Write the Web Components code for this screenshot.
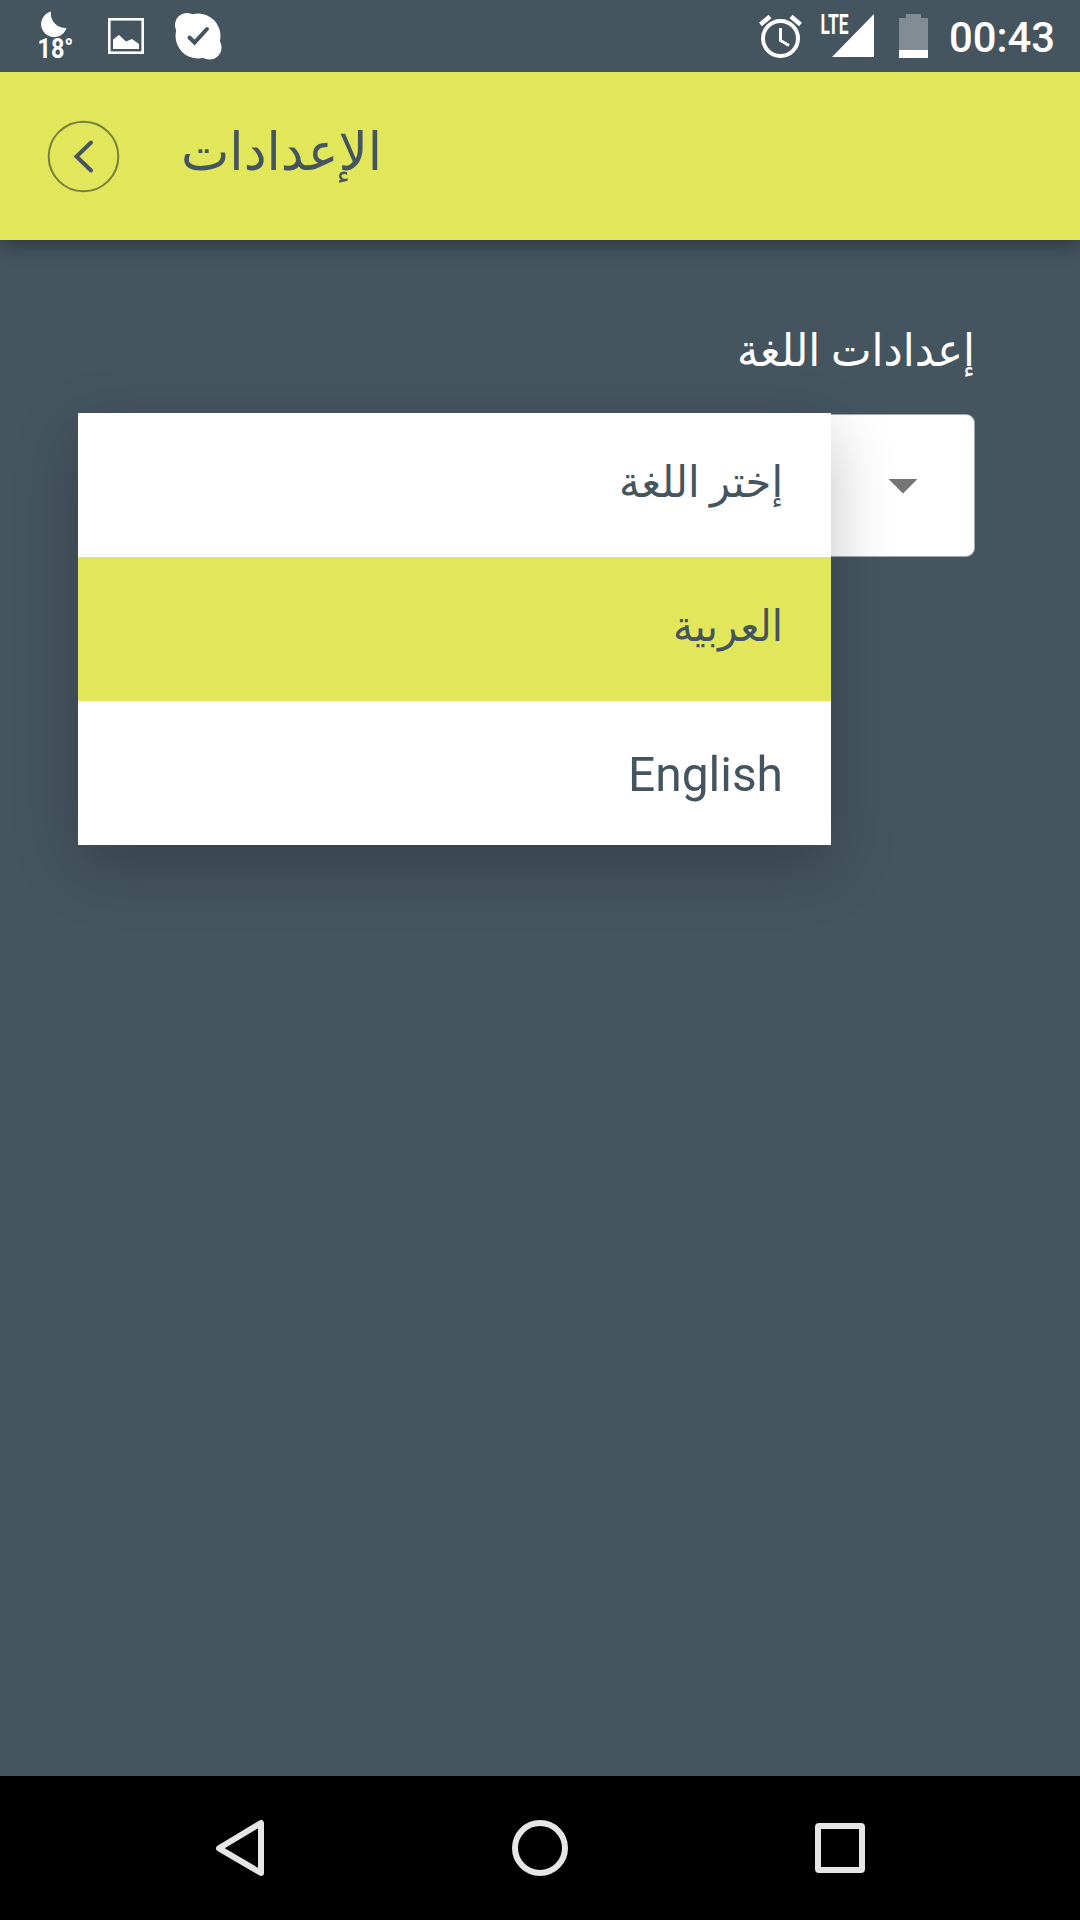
<!DOCTYPE html>
<html lang="ar">
<head>
<meta charset="utf-8">
<title>الإعدادات</title>
<style>
	body {
		margin: 0;
		font-family: Roboto, "DejaVu Sans", sans-serif;
	}
</style>
</head>
<body>
<settings-screen></settings-screen>

<script>
class FitText extends HTMLElement {
	constructor() {
		super();

		this.attachShadow({mode: 'open'});
	}

	connectedCallback() {
		this.render();
	}

	// squeezes or stretches the line to the width attribute
	render() {
		const width = parseFloat(this.getAttribute('width')) || 0;

		this.shadowRoot.innerHTML = `
			<style>
				:host {
					display: flex;
					width: ${width}px;
					direction: ltr;
				}
				span {
					flex: none;
					white-space: nowrap;
					transform-origin: 0 50%;
				}
			</style>
			<span><slot></slot></span>
		`;

		const span = this.shadowRoot.querySelector('span');
		const natural = span.getBoundingClientRect().width;
		if (natural > 0) span.style.transform = `scaleX(${width / natural})`;
	}
}

class StatusBar extends HTMLElement {
	constructor() {
		super();

		this.attachShadow({mode: 'open'});
	}

	connectedCallback() {
		this.render();
	}

	render() {
		this.shadowRoot.innerHTML = `
			<style>
				:host {
					display: flex;
					justify-content: space-between;
					box-sizing: border-box;
					height: 72px;
					padding: 0 25px 0 36px;
					background: #455560;
					color: #fff;
				}
				div {
					display: flex;
				}
				svg {
					display: block;
					flex: none;
				}
				.time {
					font-size: 42px;
					font-weight: 500;
					line-height: 75px;
				}
			</style>

			<div>
				<svg width="72" height="72" viewBox="36 0 72 72" fill="#fff">
					<path d="M51 11.5 A13 13 0 1 0 66.500 28 A14.500 14.500 0 0 1 51 11.500 Z"/>
					<text x="37.500" y="58" font-size="28" font-weight="700" textLength="36" lengthAdjust="spacingAndGlyphs">18°</text>
				</svg>
				<svg width="66" height="72" viewBox="108 0 66 72" fill="#fff">
					<rect x="109.300" y="19.300" width="33.400" height="33.400" fill="none" stroke="#fff" stroke-width="2.600"/>
					<path d="M113 49 V39.500 L119 35 L126 41.500 L132 39 L139 44 V49 Z"/>
				</svg>
				<svg width="50" height="72" viewBox="174 0 50 72" fill="#fff">
					<circle cx="198" cy="36" r="22.500"/>
					<circle cx="187" cy="25" r="12"/>
					<circle cx="209.500" cy="47.500" r="12"/>
					<path d="M189.500 37.500 L194.500 42.500 L207 29" fill="none" stroke="#455560" stroke-width="4" stroke-linecap="round"/>
				</svg>
			</div>

			<div>
				<svg width="60" height="72" viewBox="758 0 60 72" fill="none" stroke="#fff">
					<circle cx="780.500" cy="38.500" r="17.500" stroke-width="4"/>
					<path d="M760.500 24.500 L770 16.500 M800.500 24.500 L791 16.500" stroke-width="4.500"/>
					<path d="M780.500 28 V40.500 L789 45.500" stroke-width="3"/>
				</svg>
				<svg width="60" height="72" viewBox="818 0 60 72" fill="#fff">
					<path d="M832 57 L874 14 V57 Z"/>
					<text x="820.500" y="34" font-size="27" font-weight="700" textLength="28" lengthAdjust="spacingAndGlyphs">LTE</text>
				</svg>
				<svg width="71" height="72" viewBox="878 0 71 72">
					<path d="M899 50 V18 H906 V14 H921 V18 H928 V50 Z" fill="#828c94"/>
					<rect x="899" y="50" width="29" height="8" fill="#fff"/>
				</svg>
				<fit-text class="time" width="106">00:43</fit-text>
			</div>
		`;
	}
}

class AppBar extends HTMLElement {
	constructor() {
		super();

		this.attachShadow({mode: 'open'});
	}

	connectedCallback() {
		this.render();
	}

	render() {
		this.shadowRoot.innerHTML = `
			<style>
				:host {
					display: flex;
					gap: 60px;
					box-sizing: border-box;
					height: 168px;
					padding: 48px 47px;
					background: #e1e65b;
					color: #455560;
					box-shadow: 0 8px 16px rgba(0, 0, 0, 0.28);
					clip-path: inset(0 0 -40px 0);
				}
				.title {
					padding-top: 2px;
					font-size: 53px;
					line-height: 60px;
				}
			</style>

			<svg width="74" height="74" viewBox="0 0 74 74" fill="none" stroke="#455560">
				<circle cx="36.500" cy="36.500" r="34.800" stroke-width="2" stroke="#75803f"/>
				<path d="M44 22.500 L29.500 36.500 L44 50.500" stroke-width="4" stroke-linecap="round"/>
			</svg>
			<fit-text class="title" width="201"><slot></slot></fit-text>
		`;
	}
}

class SpinnerBox extends HTMLElement {
	constructor() {
		super();

		this.attachShadow({mode: 'open'});
	}

	connectedCallback() {
		this.render();
	}

	render() {
		this.shadowRoot.innerHTML = `
			<style>
				:host {
					position: relative;
					display: flex;
					justify-content: flex-end;
					align-items: center;
					box-sizing: border-box;
					width: 897px;
					height: 143px;
					padding-right: 56px;
					border: 1px solid #a3a9ae;
					border-radius: 9px;
					background: #fff;
				}
				/* the open menu lies over the box */
				.menu {
					position: absolute;
					top: -2px;
					left: -1px;
					width: 753px;
					box-shadow: 0 20px 60px rgba(0, 0, 0, 0.24);
				}
			</style>

			<svg width="30" height="16" viewBox="0 0 30 16">
				<path d="M0.500 1 H29.500 L15 15.500 Z" fill="#757575"/>
			</svg>
			<div class="menu"><slot></slot></div>
		`;
	}
}

class MenuOption extends HTMLElement {
	constructor() {
		super();

		this.attachShadow({mode: 'open'});
	}

	connectedCallback() {
		this.render();
	}

	render() {
		const width = this.getAttribute('width');

		this.shadowRoot.innerHTML = `
			<style>
				:host {
					display: flex;
					justify-content: flex-end;
					box-sizing: border-box;
					height: 144px;
					padding: 39px 48px 0 0;
					background: #fff;
					color: #455560;
					font-size: 43px;
					line-height: 60px;
				}
				:host([selected]) {
					background: #e1e65b;
				}
				:host([lang="en"]) {
					padding-top: 44px;
					font-size: 49px;
				}
			</style>

			<fit-text width="${width}"><slot></slot></fit-text>
		`;
	}
}

class NavBar extends HTMLElement {
	constructor() {
		super();

		this.attachShadow({mode: 'open'});
	}

	connectedCallback() {
		this.render();
	}

	render() {
		this.shadowRoot.innerHTML = `
			<style>
				:host {
					display: flex;
					justify-content: center;
					align-items: center;
					gap: 240px;
					height: 144px;
					background: #000;
				}
			</style>

			<svg width="60" height="60" viewBox="-30 -30 60 60" fill="none" stroke="#e6e6e6" stroke-width="6" stroke-linejoin="round">
				<path d="M-21 0.300 L21 -25 V25 Z"/>
			</svg>
			<svg width="60" height="60" viewBox="-30 -30 60 60" fill="none" stroke="#e6e6e6" stroke-width="6">
				<circle cx="0" cy="0" r="25"/>
			</svg>
			<svg width="60" height="60" viewBox="-30 -30 60 60" fill="none" stroke="#e6e6e6" stroke-width="6" stroke-linejoin="round">
				<rect x="-22" y="-22" width="44" height="44" rx="1"/>
			</svg>
		`;
	}
}

class SettingsScreen extends HTMLElement {
	constructor() {
		super();

		this.attachShadow({mode: 'open'});
	}

	connectedCallback() {
		this.render();
	}

	render() {
		this.shadowRoot.innerHTML = `
			<style>
				:host {
					display: flex;
					flex-direction: column;
					width: 1080px;
					height: 1920px;
					background: #455560;
				}
				main {
					display: flex;
					flex: 1;
					flex-direction: column;
					align-items: flex-end;
					gap: 33px;
					padding: 81px 105px 0 78px;
				}
				.label {
					color: #fff;
					font-size: 45px;
					line-height: 60px;
				}
			</style>

			<status-bar></status-bar>
			<app-bar>الإعدادات</app-bar>
			<main>
				<fit-text class="label" width="238">إعدادات اللغة</fit-text>
				<spinner-box>
					<menu-option width="164">إختر اللغة</menu-option>
					<menu-option width="110" selected>العربية</menu-option>
					<menu-option width="155" lang="en">English</menu-option>
				</spinner-box>
			</main>
			<nav-bar></nav-bar>
		`;
	}
}

customElements.define('fit-text', FitText);
customElements.define('status-bar', StatusBar);
customElements.define('app-bar', AppBar);
customElements.define('spinner-box', SpinnerBox);
customElements.define('menu-option', MenuOption);
customElements.define('nav-bar', NavBar);
customElements.define('settings-screen', SettingsScreen);
</script>
</body>
</html>
